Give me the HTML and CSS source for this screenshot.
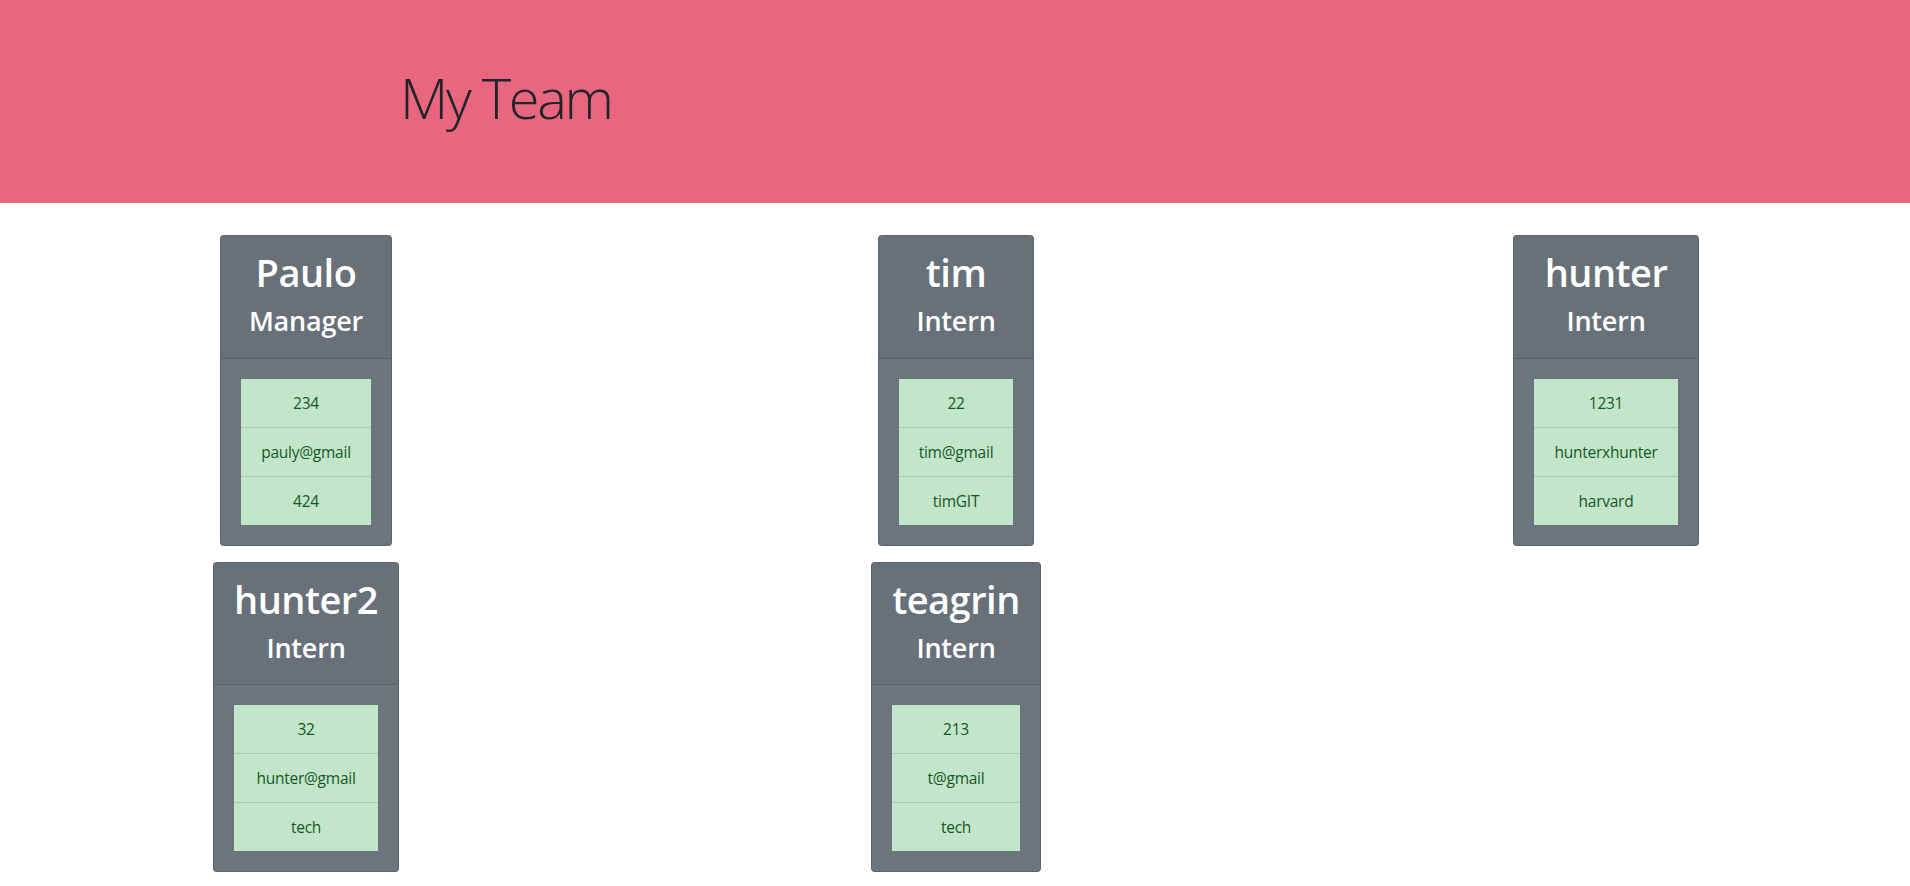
FILE: index.html
```html
<!DOCTYPE html>
<html lang="en">
<head>
<meta charset="utf-8">
<title>My Team</title>
<link rel="stylesheet" href="styles.css">
</head>
<body>
<header class="jumbotron">
  <div class="container">
    <h1 class="display">My Team</h1>
  </div>
</header>
<main class="team">
  <div class="cell">
    <div class="card">
      <div class="card-header">
        <h1 class="name">Paulo</h1>
        <h3 class="role">Manager</h3>
      </div>
      <div class="card-body">
        <ul class="list">
          <li class="item">234</li>
          <li class="item">pauly@gmail</li>
          <li class="item">424</li>
        </ul>
      </div>
    </div>
  </div>
  <div class="cell">
    <div class="card">
      <div class="card-header">
        <h1 class="name">tim</h1>
        <h3 class="role">Intern</h3>
      </div>
      <div class="card-body">
        <ul class="list">
          <li class="item">22</li>
          <li class="item">tim@gmail</li>
          <li class="item">timGIT</li>
        </ul>
      </div>
    </div>
  </div>
  <div class="cell">
    <div class="card">
      <div class="card-header">
        <h1 class="name">hunter</h1>
        <h3 class="role">Intern</h3>
      </div>
      <div class="card-body">
        <ul class="list">
          <li class="item">1231</li>
          <li class="item">hunterxhunter</li>
          <li class="item">harvard</li>
        </ul>
      </div>
    </div>
  </div>
  <div class="cell">
    <div class="card">
      <div class="card-header">
        <h1 class="name">hunter2</h1>
        <h3 class="role">Intern</h3>
      </div>
      <div class="card-body">
        <ul class="list">
          <li class="item">32</li>
          <li class="item">hunter@gmail</li>
          <li class="item">tech</li>
        </ul>
      </div>
    </div>
  </div>
  <div class="cell">
    <div class="card">
      <div class="card-header">
        <h1 class="name">teagrin</h1>
        <h3 class="role">Intern</h3>
      </div>
      <div class="card-body">
        <ul class="list">
          <li class="item">213</li>
          <li class="item">t@gmail</li>
          <li class="item">tech</li>
        </ul>
      </div>
    </div>
  </div>
</main>
</body>
</html>
```
FILE: styles.css
```css
* { box-sizing: border-box; }
html, body { margin: 0; padding: 0; }
body {
  font-family: "Open Sans", "Noto Sans", sans-serif;
  font-size: 16px;
  line-height: 1.5;
  color: #212529;
  background: #fff;
  overflow-x: hidden;
}
.jumbotron {
  background: #e8677f;
  padding: 64px 0;
  margin-bottom: 32px;
}
.container {
  width: 1140px;
  margin: 0 auto;
  padding: 0 15px;
}
.display {
  margin: 0 0 8px;
  font-size: 56px;
  font-weight: 300;
  line-height: 1.2;
  letter-spacing: -2.3px;
  color: #212529;
}
.team {
  display: grid;
  grid-template-columns: repeat(3, 650px);
  row-gap: 16px;
  margin-left: -19px;
  justify-items: center;
  align-items: start;
}
.cell { display: flex; justify-content: center; }
.card {
  display: flex;
  flex-direction: column;
  background: #6c757d;
  color: #fff;
  border: 1px solid rgba(0,0,0,.125);
  border-radius: 4px;
  overflow: hidden;
}
.card-header {
  padding: 12px 20px;
  background: rgba(0,0,0,.03);
  border-bottom: 1px solid rgba(0,0,0,.125);
  text-align: center;
}
.name {
  margin: 0 0 8px;
  font-size: 38px;
  font-weight: 600;
  line-height: 48px;
  letter-spacing: -0.5px;
}
.role {
  margin: 0 0 8px;
  font-size: 27px;
  font-weight: 600;
  line-height: 33.6px;
  letter-spacing: -0.2px;
}
.card-body { padding: 20px; }
.list {
  list-style: none;
  margin: 0;
  padding: 0;
}
.item {
  background: #c3e6cb;
  color: #155724;
  padding: 12px 20px;
  font-size: 15.5px;
  line-height: 24px;
  letter-spacing: -0.25px;
  text-align: center;
  border-bottom: 1px solid rgba(0,0,0,.125);
  white-space: nowrap;
}
.item:last-child { border-bottom: 0; }
```
